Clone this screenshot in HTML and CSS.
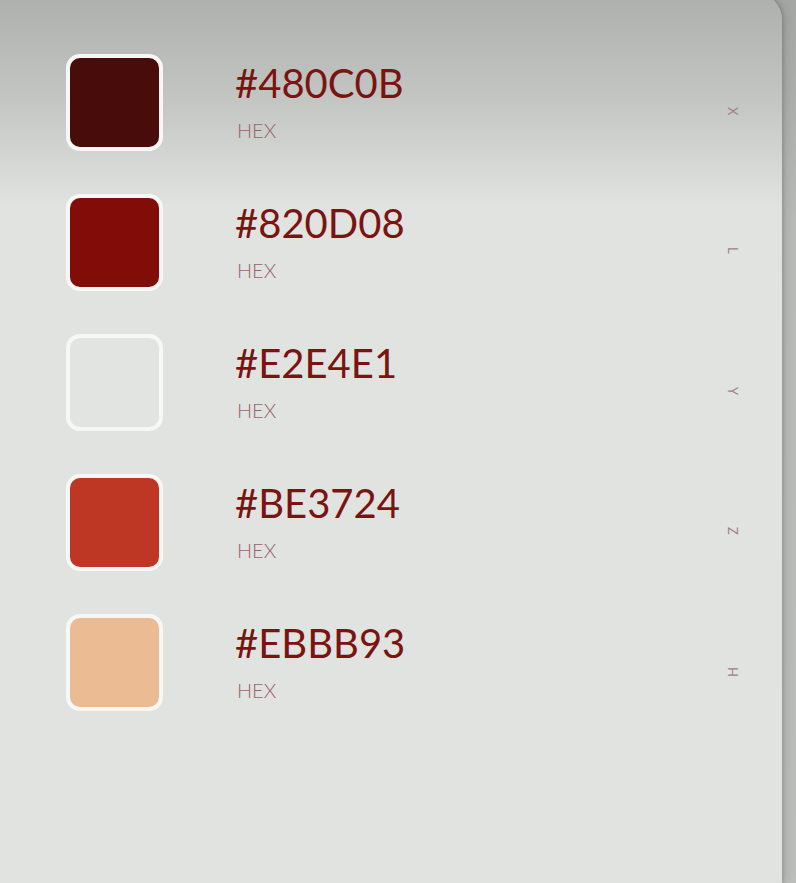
FILE: index.html
```html
<!DOCTYPE html>
<html lang="en">
<head>
<meta charset="utf-8">
<title>Palette</title>
<link rel="stylesheet" href="styles.css">
</head>
<body>
<div class="screen">
  <main class="panel">
    <ul class="list">
      <li class="row">
        <span class="swatch" style="background:#480C0B"></span>
        <div class="info"><span class="hex">#480C0B</span><span class="label">HEX</span></div>
        <span class="letter">X</span>
      </li>
      <li class="row">
        <span class="swatch" style="background:#820D08"></span>
        <div class="info"><span class="hex">#820D08</span><span class="label">HEX</span></div>
        <span class="letter">L</span>
      </li>
      <li class="row">
        <span class="swatch" style="background:#E2E4E1"></span>
        <div class="info"><span class="hex">#E2E4E1</span><span class="label">HEX</span></div>
        <span class="letter">Y</span>
      </li>
      <li class="row">
        <span class="swatch" style="background:#BE3724"></span>
        <div class="info"><span class="hex">#BE3724</span><span class="label">HEX</span></div>
        <span class="letter">Z</span>
      </li>
      <li class="row">
        <span class="swatch" style="background:#EBBB93"></span>
        <div class="info"><span class="hex">#EBBB93</span><span class="label">HEX</span></div>
        <span class="letter">H</span>
      </li>
    </ul>
  </main>
  <div class="edge"></div>
</div>
</body>
</html>
```
FILE: styles.css
```css
html, body {
  margin: 0;
  padding: 0;
}
body {
  width: 796px;
  height: 883px;
  overflow: hidden;
  font-family: Lato, "Open Sans", sans-serif;
}
.screen {
  display: flex;
  height: 883px;
  background: linear-gradient(to bottom, #a5a7a4 0, #b9bbb8 220px, #bdbfbc 100%);
}
.panel {
  width: 782px;
  flex: none;
  margin-top: -8px;
  height: 891px;
  background: linear-gradient(to bottom, #adafac 0, #c4c6c3 110px, #e1e3e0 215px, #e1e3e0 100%);
  border-top-right-radius: 28px;
  box-shadow: 2px 0 3px rgba(0,0,0,0.12), 6px 0 10px rgba(0,0,0,0.08);
}
.edge {
  flex: 1;
}
.list {
  list-style: none;
  margin: 0;
  padding: 62px 39px 0 66px;
  display: flex;
  flex-direction: column;
  gap: 43px;
}
.row {
  display: flex;
  align-items: flex-start;
  height: 97px;
}
.swatch {
  flex: none;
  width: 89px;
  height: 89px;
  border: 4px solid #f7f7f6;
  border-radius: 14px;
  box-sizing: content-box;
}
.info {
  display: flex;
  flex-direction: column;
  margin-left: 72px;
  padding-top: 9px;
  flex: 1;
}
.hex {
  font-size: 40px;
  font-weight: 400;
  line-height: 40px;
  color: #7a1411;
}
.label {
  margin-top: 17px;
  margin-left: 2px;
  font-size: 20px;
  font-weight: 300;
  line-height: 20px;
  color: #98646a;
}
.letter {
  writing-mode: vertical-rl;
  width: 20px;
  text-align: center;
  margin-top: 53px;
  font-size: 13px;
  line-height: 20px;
  color: #a08085;
}
```
